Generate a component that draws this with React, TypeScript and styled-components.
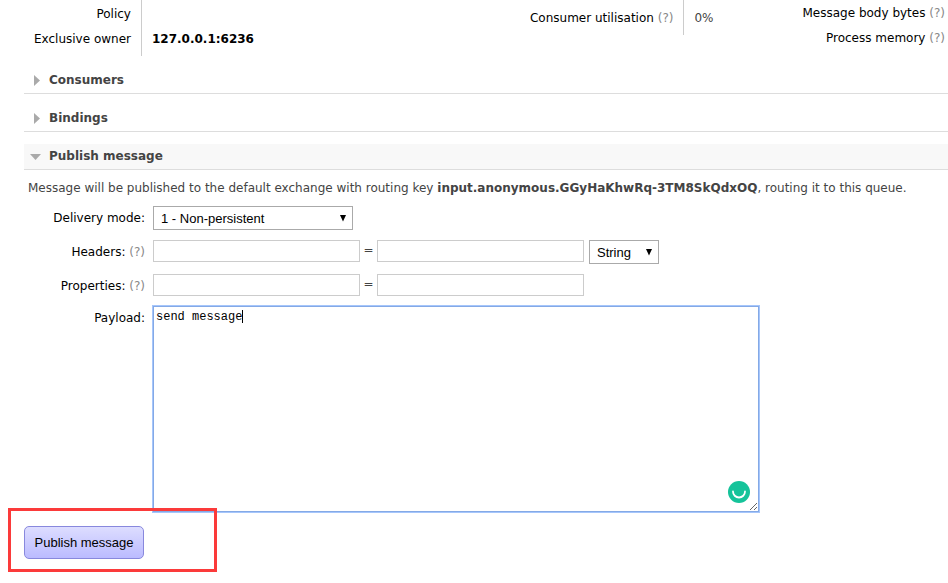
import React, { useState } from "react";
import styled, { createGlobalStyle } from "styled-components";

const GlobalStyle = createGlobalStyle`
  *, *::before, *::after { box-sizing: border-box; }
  body {
    margin: 0;
    background: #fff;
    color: #444;
    font: 12px/17px Verdana, "DejaVu Sans", sans-serif;
  }
`;

const Page = styled.main`
  padding: 0 0 24px 24px;
`;

const Overview = styled.div`
  display: grid;
  grid-template-columns: minmax(0, 1fr) auto auto;
  column-gap: 89px;
  align-items: start;
  padding-left: 10px;
`;

const Facts = styled.table`
  border-collapse: collapse;
  justify-self: start;
`;

const FactLabel = styled.th<{ $divided?: boolean; $last?: boolean; $top?: number }>`
  padding: ${(p) => p.$top ?? 4}px ${(p) => (p.$divided ? 10 : 3)}px ${(p) => (p.$last ? 8 : 4)}px 0;
  color: #000;
  font-weight: normal;
  text-align: right;
  white-space: nowrap;
  border-right: ${(p) => (p.$divided ? "1px solid #ccc" : "none")};
`;

const FactValue = styled.td<{ $strong?: boolean; $top?: number }>`
  padding: ${(p) => p.$top ?? 4}px 0 4px 10px;
  vertical-align: top;
  white-space: nowrap;
  color: ${(p) => (p.$strong ? "#000" : "#444")};
  font-weight: ${(p) => (p.$strong ? "bold" : "normal")};
`;

const HelpMark = styled.a`
  color: #888;
  text-decoration: none;
`;

const SectionHeading = styled.h2<{ $open?: boolean }>`
  margin: 12px 0 0;
  background: ${(p) => (p.$open ? "#f8f8f8" : "transparent")};
  border-bottom: 1px solid #ddd;
  font-size: 12px;
  line-height: 17px;
`;

const SectionToggle = styled.button`
  display: flex;
  align-items: center;
  gap: 7px;
  width: 100%;
  padding: 4px 6px;
  border: 0;
  background: none;
  color: #444;
  font: inherit;
  text-align: left;
  cursor: pointer;
`;

const Intro = styled.p`
  margin: 10px 4px 9px;
`;

const FormTable = styled.table`
  border-collapse: collapse;
`;

const FieldLabel = styled.th`
  width: 129px;
  padding: 4px 8px 0 0;
  color: #000;
  font-weight: normal;
  text-align: right;
  vertical-align: top;
  white-space: nowrap;
`;

const FieldCell = styled.td`
  padding: 0 0 10px;
  vertical-align: top;
`;

const FieldRow = styled.div`
  display: flex;
  align-items: flex-start;
`;

const TextInput = styled.input`
  width: 207px;
  height: 22px;
  padding: 2px 4px;
  border: 1px solid #ccc;
  background: #fff;
  font: 13px "Liberation Sans", Arial, sans-serif;
`;

const Equals = styled.span`
  width: 17px;
  padding-top: 2px;
  text-align: center;
`;

const SelectFrame = styled.span<{ $width: number }>`
  display: inline-grid;
  align-items: center;
  width: ${(p) => p.$width}px;
  height: 24px;

  > * { grid-area: 1 / 1; }
  > svg { justify-self: end; margin-right: 7px; pointer-events: none; }
`;

const Select = styled.select`
  appearance: none;
  width: 100%;
  height: 24px;
  padding: 0 7px;
  border: 1px solid #aaa;
  border-radius: 0;
  background: #fff;
  color: #000;
  font: 13px "Liberation Sans", Arial, sans-serif;
`;

const TypeSlot = styled.span`
  display: flex;
  margin-left: 5px;
`;

const PayloadFrame = styled.div`
  position: relative;
`;

const Payload = styled.textarea`
  display: block;
  width: 606px;
  height: 206px;
  padding: 2px;
  border: 1px solid #84a9e6;
  box-shadow: 0 0 0 1px #a6c6fb;
  outline: none;
  background: #fff;
  color: #000;
  resize: both;
  font: 12px/17px "Liberation Mono", "Courier New", monospace;
`;

const Caret = styled.span`
  position: absolute;
  top: 4px;
  left: 3px;
  width: 12ch;
  height: 13px;
  border-right: 1px solid #000;
  font: 12px "Liberation Mono", "Courier New", monospace;
  box-sizing: content-box;
  pointer-events: none;
`;

const AssistantBadge = styled.span`
  position: absolute;
  right: 9px;
  bottom: 9px;
  display: flex;
`;

const Actions = styled.div`
  position: relative;
  width: fit-content;
  margin-top: 4px;
`;

const PublishButton = styled.button`
  display: block;
  min-width: 120px;
  height: 33px;
  padding: 0 8px;
  border: 1px solid #8888dd;
  border-radius: 5px;
  background: linear-gradient(#ddddff, #bbbbff);
  color: #000;
  font: 13px "Liberation Sans", Arial, sans-serif;
  cursor: pointer;
`;

const Highlight = styled.span`
  position: absolute;
  inset: -18px -73px -13px -16px;
  border: 3px solid #fb3a3a;
  pointer-events: none;
`;

const Help = ({ about }: { about: string }) => (
  <HelpMark href="#help" aria-label={`Help: ${about}`}>(?)</HelpMark>
);

const Chevron = ({ open }: { open: boolean }) => (
  <svg width="12" height="12" viewBox="0 0 12 12" fill="#aaa" aria-hidden="true">
    <path d={open ? "M0 3H11L5.5 9Z" : "M4 0L10 5.5L4 11Z"} />
  </svg>
);

const DropArrow = () => (
  <svg width="6" height="7" viewBox="0 0 6 7" aria-hidden="true">
    <path d="M0 0H6L3 6.5Z" fill="#000" />
  </svg>
);

const Section = ({ title, initial = false, children }: {
  title: string;
  initial?: boolean;
  children?: React.ReactNode;
}) => {
  const [open, setOpen] = useState(initial);
  return (
    <section>
      <SectionHeading $open={open}>
        <SectionToggle type="button" aria-expanded={open} onClick={() => setOpen(!open)}>
          <Chevron open={open} />
          {title}
        </SectionToggle>
      </SectionHeading>
      {open && children}
    </section>
  );
};

const PairRow = ({ name, children }: { name: string; children?: React.ReactNode }) => {
  const id = name.toLowerCase();
  return (
    <tr>
      <FieldLabel scope="row">
        <label htmlFor={id}>{name}:</label> <Help about={name} />
      </FieldLabel>
      <FieldCell>
        <FieldRow>
          <TextInput id={id} type="text" />
          <Equals>=</Equals>
          <TextInput type="text" aria-label={`${name} value`} />
          {children}
        </FieldRow>
      </FieldCell>
    </tr>
  );
};

export default function App() {
  const [payload, setPayload] = useState("send message");
  return (
    <>
      <GlobalStyle />
      <Page>
        <Overview>
          <Facts>
            <tbody>
              <tr>
                <FactLabel scope="row" $divided $top={6}>Policy</FactLabel>
                <FactValue />
              </tr>
              <tr>
                <FactLabel scope="row" $divided $last>Exclusive owner</FactLabel>
                <FactValue $strong>127.0.0.1:6236</FactValue>
              </tr>
            </tbody>
          </Facts>
          <Facts>
            <tbody>
              <tr>
                <FactLabel scope="row" $divided $last $top={10}>
                  Consumer utilisation <Help about="Consumer utilisation" />
                </FactLabel>
                <FactValue $top={10}>0%</FactValue>
              </tr>
            </tbody>
          </Facts>
          <Facts>
            <tbody>
              <tr>
                <FactLabel scope="row" $top={5}>Message body bytes <Help about="Message body bytes" /></FactLabel>
              </tr>
              <tr>
                <FactLabel scope="row">Process memory <Help about="Process memory" /></FactLabel>
              </tr>
            </tbody>
          </Facts>
        </Overview>

        <Section title="Consumers" />
        <Section title="Bindings" />
        <Section title="Publish message" initial>
          <Intro>
            Message will be published to the default exchange with routing key{" "}
            <b>input.anonymous.GGyHaKhwRq-3TM8SkQdxOQ</b>, routing it to this queue.
          </Intro>
          <form onSubmit={(e) => e.preventDefault()}>
            <FormTable>
              <tbody>
                <tr>
                  <FieldLabel scope="row"><label htmlFor="mode">Delivery mode:</label></FieldLabel>
                  <FieldCell>
                    <FieldRow>
                      <SelectFrame $width={200}>
                        <Select id="mode" defaultValue="1">
                          <option value="1">1 - Non-persistent</option>
                          <option value="2">2 - Persistent</option>
                        </Select>
                        <DropArrow />
                      </SelectFrame>
                    </FieldRow>
                  </FieldCell>
                </tr>
                <PairRow name="Headers">
                  <TypeSlot>
                    <SelectFrame $width={70}>
                      <Select aria-label="Header type">
                        <option>String</option>
                        <option>Number</option>
                        <option>Boolean</option>
                      </Select>
                      <DropArrow />
                    </SelectFrame>
                  </TypeSlot>
                </PairRow>
                <PairRow name="Properties" />
                <tr>
                  <FieldLabel scope="row"><label htmlFor="payload">Payload:</label></FieldLabel>
                  <FieldCell>
                    <PayloadFrame>
                      <Payload
                        id="payload"
                        spellCheck={false}
                        value={payload}
                        onChange={(e) => setPayload(e.target.value)}
                      />
                      <Caret />
                      <AssistantBadge>
                        <svg width="22" height="22" viewBox="0 0 22 22" aria-hidden="true">
                          <circle cx="11" cy="11" r="11" fill="#15c39a" />
                          <path d="M5 10.5a6 6 0 0 0 12 0" fill="none" stroke="#fff" strokeWidth="1.8" strokeLinecap="round" />
                        </svg>
                      </AssistantBadge>
                    </PayloadFrame>
                  </FieldCell>
                </tr>
              </tbody>
            </FormTable>
            <Actions>
              <PublishButton type="submit">Publish message</PublishButton>
              <Highlight />
            </Actions>
          </form>
        </Section>
      </Page>
    </>
  );
}
